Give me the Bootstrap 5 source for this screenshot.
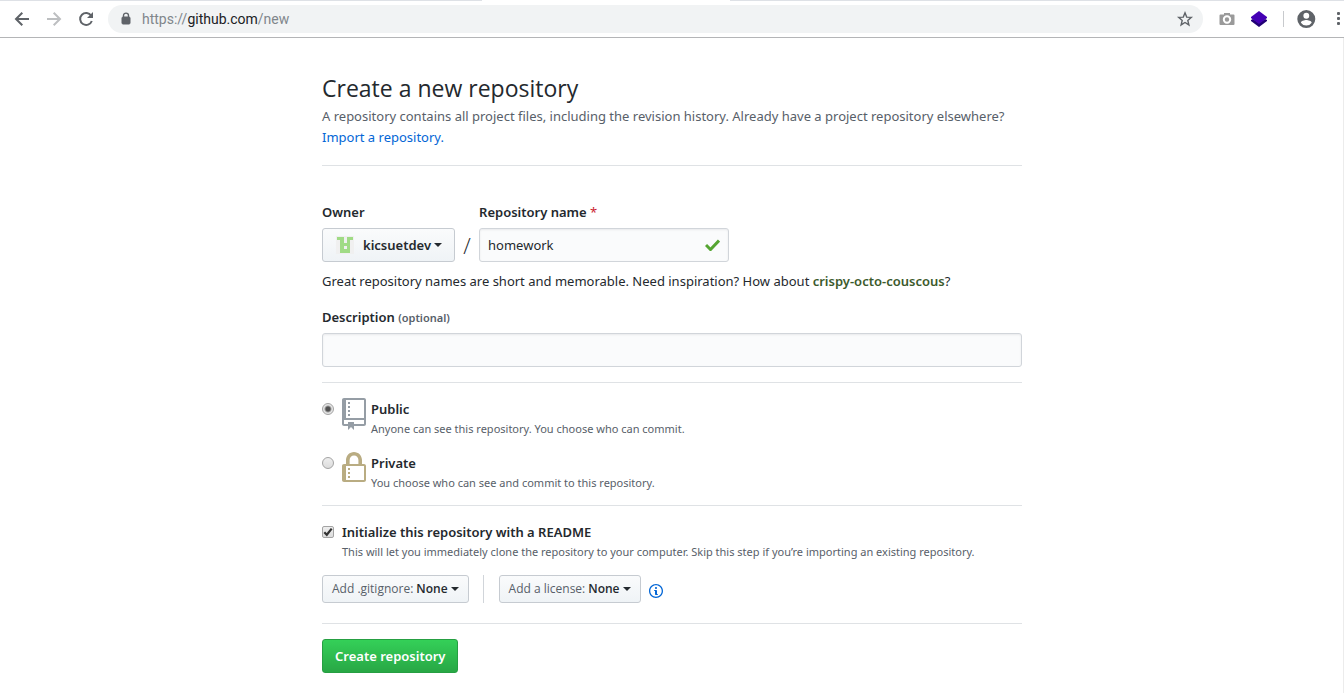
<!DOCTYPE html>
<html lang="en">
<head>
<meta charset="utf-8">
<meta name="viewport" content="width=device-width, initial-scale=1">
<title>Create a new repository</title>
<link rel="stylesheet" href="https://cdn.jsdelivr.net/npm/bootstrap@5.3.0/dist/css/bootstrap.min.css">
<style>
body { font: 13px/21px "Noto Sans", "Open Sans", sans-serif; color: #24292e; background: #fff; }
.toolbar { height: 37px; border-bottom: 1px solid #b4b5b7; padding: 0 0 0 14px; }
.tabstrip { height: 1px; }
.tabstrip span { background: #dee1e6; }
.tab-left { width: 482px; }
.tab-active { width: 248px; background: #fff !important; }
.tool-btn { border: 0; background: none; padding: 0; width: 16px; height: 16px; line-height: 0; color: #5f6368; }
.tool-btn svg { display: block; overflow: visible; }
.tool-menu { width: 8px; }
.nav-btns { gap: 16px; margin-right: 14px; }
.omnibox { height: 28px; border-radius: 14px; background: #f1f3f4; padding: 0 10px 0 13px; }
.url-box { font-family: Roboto, sans-serif; font-size: 14px; line-height: 20px; color: #80868b; margin-left: 11px; }
.url-box b { font-weight: 400; color: #202124; }
.tool-sep { width: 1px; height: 16px; background: #c8cacd; }
.page-body { border-right: 1px solid #ececec; padding: 32px 0 20px 1px; }
.sheet { max-width: 700px; }
h1 { font: 400 23px/36px "Open Sans", "Noto Sans", sans-serif; margin: 0; }
.subhead { color: #586069; margin: 0 0 17px; }
a { color: #0366d6; text-decoration: none; }
.rule { border: 0; border-top: 1px solid #dfe2e5; opacity: 1; margin: 15px 0; }
.fw-label { font-weight: 600; }
.field-label { font-weight: 600; display: block; margin-bottom: 5px; }
.owner-row { margin-top: 36px; }
.suggestion { margin: 9px 0 15px; }
.btn-gh { height: 34px; display: flex; align-items: center; font-size: 13px; line-height: 20px; font-weight: 600; padding: 0 12px; border: 1px solid #c6cbd1; border-radius: 3px; color: #24292e; background: linear-gradient(#fafbfc, #eff3f6); white-space: nowrap; }
.btn-small { height: 28px; font-family: "Open Sans", sans-serif; font-size: 12px; padding: 0 9px; }
.btn-small span { font-weight: 400; color: #586069; margin-right: 3px; }
.btn-gh::after { margin-left: 3px; border-top-width: 4px; border-left-width: 4px; border-right-width: 4px; }
.btn-create { color: #fff; border-color: #269f42; background: linear-gradient(#34d058, #28a745); }
.avatar-pic { width: 20px; height: 20px; margin-right: 8px; }
.gh-input { height: 34px; font-size: 13px; line-height: 20px; padding: 6px 8px; color: #24292e; background: #fafbfc; border: 1px solid #d1d5da; border-radius: 3px; box-shadow: inset 0 1px 2px rgba(27,31,35,.075); }
.slash { font: 300 22px/34px "Open Sans", sans-serif; width: 24px; color: #24292e; text-align: center; }
.name-box { width: 250px; }
.name-box svg { right: 9px; top: 11px; }
.hint { font-size: 11px; line-height: 18px; color: #586069; }
.option-row { margin-bottom: 14px; }
.option-row + .rule { margin-top: -1px; }
.option-text { padding-top: 1px; }
.tick { appearance: none; flex: none; width: 12px; height: 12px; margin: 5px 8px 0 0; border: 1px solid #a3a3a3; background: linear-gradient(#eee, #dcdcdc); }
.tick[type=radio] { border-radius: 50%; }
.tick[type=radio]:checked { background: radial-gradient(circle, #505050 0 2px, #e6e6e6 4px); }
.tick[type=checkbox] { border-radius: 2px; background: url("data:image/svg+xml,%3Csvg xmlns='http://www.w3.org/2000/svg' viewBox='0 0 10 10'%3E%3Cpath d='M1.3 5.2 3.8 7.8 8.7 1.6' fill='none' stroke='%23333' stroke-width='2.2'/%3E%3C/svg%3E") center / 10px, linear-gradient(#eee, #dcdcdc); }
.choice-icon { flex: none; margin-right: 5px; }
.split { width: 1px; height: 28px; background: #d1d5da; margin: 0 15px 0 14px; }
.last-rule { margin-top: 20px; }
</style>
</head>
<body>
<div class="tabstrip d-flex"><span class="tab-left"></span><span class="tab-active"></span><span class="flex-grow-1"></span></div>
<nav class="toolbar d-flex align-items-center" aria-label="Browser">
  <div class="nav-btns d-flex">
    <button class="tool-btn" aria-label="Back"><svg width="16" height="16" fill="none" stroke="currentColor" stroke-width="2"><path d="M15 8H2M8.3 1.7 2 8l6.3 6.3"/></svg></button>
    <button class="tool-btn" aria-label="Forward"><svg width="16" height="16" fill="none" stroke="#bdbfc1" stroke-width="2"><path d="M1 8h13M7.7 1.7 14 8l-6.3 6.3"/></svg></button>
    <button class="tool-btn" aria-label="Reload"><svg width="16" height="16"><path d="M13.2 4.7A6 6 0 1 0 13.8 10" fill="none" stroke="currentColor" stroke-width="2"/><path d="M15 1v6H9z" fill="currentColor"/></svg></button>
  </div>
  <div class="omnibox d-flex align-items-center flex-grow-1">
    <svg width="10" height="14"><path d="M2.500 6V3.600a2.500 2.500 0 0 1 5 0V6" fill="none" stroke="#5f6368" stroke-width="1.400"/><rect x="1" y="5" width="8" height="7" rx="1" fill="#5f6368" stroke="#5f6368"/></svg>
    <div class="url-box flex-grow-1">https://<b>github.com</b>/new</div>
    <button class="tool-btn" aria-label="Bookmark"><svg width="16" height="16"><path d="m8 1.800 1.700 4.300 4.600.3-3.500 3 1.100 4.500L8 11.500l-3.900 2.400 1.100-4.500-3.500-3 4.600-.3z" fill="none" stroke="currentColor" stroke-width="1.400"/></svg></button>
  </div>
  <div class="d-flex align-items-center gap-3 ms-3">
    <button class="tool-btn" aria-label="Capture"><svg width="16" height="16"><path fill="#9a9a9a" d="M5 3V2h6v1.500h3.500q1 0 1 1V13q0 1-1 1h-13q-1 0-1-1V4.500q0-1 1-1H5z"/><circle cx="8" cy="8.500" r="3.200" fill="none" stroke="#fff" stroke-width="2"/></svg></button>
    <button class="tool-btn" aria-label="Layers"><svg width="16" height="16"><path fill="#220075" d="m0 9 2-1 6 4 6-4 2 1v1l-8 6-8-6z"/><path fill="#4400b4" d="m8 0 8 6v1l-8 6-8-6V6z"/></svg></button>
    <div class="tool-sep"></div>
    <button class="tool-btn me-1" aria-label="Profile"><svg width="18" height="18" viewBox="5 3 20 20"><path fill="currentColor" d="M12 2a10 10 0 1 0 0 20 10 10 0 0 0 0-20zm0 3a3 3 0 1 1 0 6.500A3 3 0 0 1 12 5zm0 14.200a7.200 7.200 0 0 1-6-3.200c0-2 4-3.100 6-3.100s6 1.100 6 3.100a7.200 7.200 0 0 1-6 3.200z"/></svg></button>
    <button class="tool-btn tool-menu" aria-label="Menu"><svg width="8" height="16" fill="currentColor"><rect x="1" y="1" width="3" height="3" rx="1"/><rect x="1" y="6" width="3" height="3" rx="1"/><rect x="1" y="11" width="3" height="3" rx="1"/></svg></button>
  </div>
</nav>

<main class="page-body">
  <form class="sheet mx-auto">
    <h1>Create a new repository</h1>
    <p class="subhead">A repository contains all project files, including the revision history. Already have a project repository elsewhere? <a class="d-table" href="#">Import a repository.</a></p>
    <hr class="rule">

    <div class="owner-row d-flex align-items-end">
      <div>
        <label class="field-label" for="owner">Owner</label>
        <button type="button" id="owner" class="btn btn-gh dropdown-toggle"><svg class="avatar-pic" viewBox="0 0 20 20"><path fill="#f0f0f0" d="M1 1h18v18H1z"/><path fill="#a0db85" fill-rule="evenodd" d="M2 2h7v6h3V2h6v3h-3v13H5V5H2zm7 9v3h3v-3z"/></svg>kicsuetdev</button>
      </div>
      <div class="slash">/</div>
      <div>
        <label class="field-label" for="repo-name">Repository name <span class="fw-normal" style="color:#cb2431">*</span></label>
        <div class="name-box position-relative">
          <input class="form-control gh-input" id="repo-name" type="text" value="homework">
          <svg class="position-absolute" width="15" height="12"><path d="m1 6 4.500 4.500L14 1.500" fill="none" stroke="#55a532" stroke-width="3"/></svg>
        </div>
      </div>
    </div>
    <p class="suggestion">Great repository names are short and memorable. Need inspiration? How about <strong class="fw-label" style="color:#3c5a2c">crispy-octo-couscous</strong>?</p>

    <label class="field-label" for="desc">Description <span class="hint">(optional)</span></label>
    <input class="form-control gh-input" id="desc" type="text">
    <hr class="rule">

    <div class="option-row d-flex">
      <input class="tick" type="radio" name="visibility" id="public" checked>
      <svg class="choice-icon" width="24" height="32" viewBox="0 0 12 16" fill="#959da5"><path d="M4 9H3V8h1v1zm0-3H3v1h1V6zm0-2H3v1h1V4zm0-2H3v1h1V2zm8-1v12c0 .55-.45 1-1 1H6v2l-1.500-1.500L3 16v-2H1c-.55 0-1-.45-1-1V1c0-.55.45-1 1-1h10c.55 0 1 .45 1 1zm-1 10H1v2h2v-1h3v1h5v-2zm0-10H2v9h9V1z"/></svg>
      <div class="option-text"><label class="fw-label d-block" for="public">Public</label><div class="hint">Anyone can see this repository. You choose who can commit.</div></div>
    </div>
    <div class="option-row d-flex">
      <input class="tick" type="radio" name="visibility" id="private">
      <svg class="choice-icon" width="24" height="32" viewBox="0 0 12 16" fill="#b9ac82"><path d="M4 13H3v-1h1v1zm8-6v7c0 .55-.45 1-1 1H1c-.55 0-1-.45-1-1V7c0-.55.45-1 1-1h1V4c0-2.200 1.800-4 4-4s4 1.800 4 4v2h1c.55 0 1 .45 1 1zM3.800 6h4.410V4c0-1.220-.98-2.200-2.200-2.200-1.220 0-2.200.98-2.200 2.200v2H3.800zM11 7H2v7h9V7zM4 8H3v1h1V8zm0 2H3v1h1v-1z"/></svg>
      <div class="option-text"><label class="fw-label d-block" for="private">Private</label><div class="hint">You choose who can see and commit to this repository.</div></div>
    </div>
    <hr class="rule">

    <div class="option-row d-flex">
      <input class="tick" type="checkbox" id="readme" checked>
      <div class="option-text"><label class="fw-label d-block" for="readme">Initialize this repository with a README</label><div class="hint">This will let you immediately clone the repository to your computer. Skip this step if you’re importing an existing repository.</div></div>
    </div>
    <div class="d-flex align-items-center">
      <button type="button" class="btn btn-gh btn-small dropdown-toggle"><span>Add .gitignore:</span> None</button>
      <div class="split"></div>
      <button type="button" class="btn btn-gh btn-small dropdown-toggle"><span>Add a license:</span> None</button>
      <a href="#" class="ms-2 pt-1 lh-1" aria-label="License help"><svg class="d-block" width="14" height="16" viewBox="0 0 14 16" fill="currentColor"><path d="M6.300 5.710a.942.942 0 0 1-.28-.7c0-.28.09-.52.28-.7.19-.18.42-.28.7-.28.28 0 .52.09.7.28.18.19.28.42.28.7 0 .28-.09.52-.28.7a1 1 0 0 1-.7.3c-.28 0-.52-.11-.7-.3zM8 8.010c-.02-.25-.11-.48-.31-.69-.2-.19-.42-.3-.69-.31H6c-.27.02-.48.13-.69.31-.2.2-.3.44-.31.69h1v3c.02.27.11.5.31.69.2.2.42.31.69.31h1c.27 0 .48-.11.69-.31.2-.19.3-.42.31-.69H8V8v.01zM7 2.320C3.860 2.320 1.300 4.860 1.300 8c0 3.140 2.560 5.700 5.700 5.700s5.700-2.550 5.700-5.700c0-3.150-2.560-5.690-5.700-5.690v.01zM7 1c3.860 0 7 3.140 7 7s-3.140 7-7 7-7-3.120-7-7 3.140-7 7-7z"/></svg></a>
    </div>
    <hr class="rule last-rule">
    <button type="submit" class="btn btn-gh btn-create">Create repository</button>
  </form>
</main>
<script src="https://cdn.jsdelivr.net/npm/bootstrap@5.3.0/dist/js/bootstrap.bundle.min.js"></script>
</body>
</html>
